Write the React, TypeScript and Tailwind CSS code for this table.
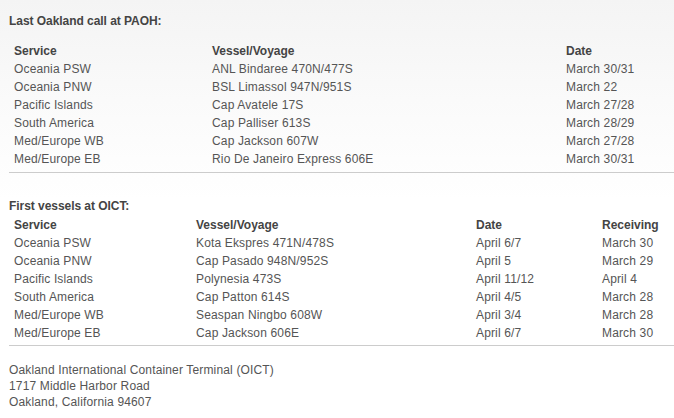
import React from "react";

const t1 = [
  ["Oceania PSW", "ANL Bindaree 470N/477S", "March 30/31"],
  ["Oceania PNW", "BSL Limassol 947N/951S", "March 22"],
  ["Pacific Islands", "Cap Avatele 17S", "March 27/28"],
  ["South America", "Cap Palliser 613S", "March 28/29"],
  ["Med/Europe WB", "Cap Jackson 607W", "March 27/28"],
  ["Med/Europe EB", "Rio De Janeiro Express 606E", "March 30/31"],
];

const t2 = [
  ["Oceania PSW", "Kota Ekspres 471N/478S", "April 6/7", "March 30"],
  ["Oceania PNW", "Cap Pasado 948N/952S", "April 5", "March 29"],
  ["Pacific Islands", "Polynesia 473S", "April 11/12", "April 4"],
  ["South America", "Cap Patton 614S", "April 4/5", "March 28"],
  ["Med/Europe WB", "Seaspan Ningbo 608W", "April 3/4", "March 28"],
  ["Med/Europe EB", "Cap Jackson 606E", "April 6/7", "March 30"],
];

export default function App() {
  return (
    <div
      className="w-[674px] h-[418px] overflow-hidden pl-[9px] text-[12px] leading-[18px] tracking-[0.15px] text-[#555]"
      style={{
        fontFamily: '"Liberation Sans", Arial, sans-serif',
        background: "linear-gradient(to bottom, #f4f4f4 0px, #fafafa 100px, #ffffff 200px)",
      }}
    >
      <div className="pt-[12px] font-bold tracking-[-0.05px] text-[#444]">Last Oakland call at PAOH:</div>
      <div className="mt-[12px] border-b border-[#cccccc] pb-[4px]">
        <div className="grid grid-cols-[198px_354px_1fr] font-bold tracking-normal text-[#444]">
          <div className="pl-[5px]">Service</div>
          <div className="pl-[5px]">Vessel/Voyage</div>
          <div className="pl-[5px]">Date</div>
        </div>
        {t1.map((r, i) => (
          <div key={i} className="grid grid-cols-[198px_354px_1fr]">
            {r.map((c, j) => (
              <div key={j} className="pl-[5px]">{c}</div>
            ))}
          </div>
        ))}
      </div>
      <div className="mt-[24px] pb-[1px] font-bold tracking-[-0.05px] text-[#444]">First vessels at OICT:</div>
      <div className="border-b border-[#cccccc] pb-[3px]">
        <div className="grid grid-cols-[182px_280px_126px_1fr] font-bold tracking-normal text-[#444]">
          <div className="pl-[5px]">Service</div>
          <div className="pl-[5px]">Vessel/Voyage</div>
          <div className="pl-[5px]">Date</div>
          <div className="pl-[5px]">Receiving</div>
        </div>
        {t2.map((r, i) => (
          <div key={i} className="grid grid-cols-[182px_280px_126px_1fr]">
            {r.map((c, j) => (
              <div key={j} className="pl-[5px]">{c}</div>
            ))}
          </div>
        ))}
      </div>
      <div className="mt-[16px] leading-[16px]">
        <div>Oakland International Container Terminal (OICT)</div>
        <div>1717 Middle Harbor Road</div>
        <div>Oakland, California 94607</div>
      </div>
    </div>
  );
}
